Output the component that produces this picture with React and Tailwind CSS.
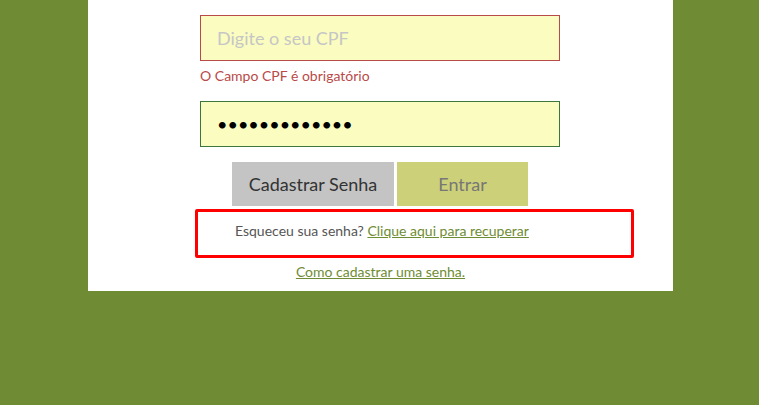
export default function App() {
  return (
    <div className="w-[759px] h-[405px] bg-[#6f8c34] font-['Lato','Liberation_Sans',sans-serif] overflow-hidden">
      <div className="ml-[88px] w-[585px] h-[291px] bg-white flex flex-col pt-[15px]">
        {/* CPF */}
        <div className="ml-[112px] w-[360px]">
          <input
            type="text"
            placeholder="Digite o seu CPF"
            className="w-full h-[46px] px-[16px] bg-[#fafdbf] border border-[#b94a48] text-[18px] text-[#555] placeholder-[#c6c6c6] outline-none"
          />
          <p className="mt-[7px] text-[14px] leading-[16px] text-[#b94a48]">
            O Campo CPF é obrigatório
          </p>
        </div>

        {/* Senha */}
        <div className="ml-[112px] w-[360px] mt-[17px]">
          <input
            type="password"
            defaultValue="1234567890123"
            className="w-full h-[46px] px-[16px] bg-[#fafdbf] border border-[#3c763d] text-[18px] text-black outline-none"
          />
        </div>

        {/* Botoes */}
        <div className="flex ml-[144px] gap-[3px] mt-[15px]">
          <button className="w-[162px] h-[44px] bg-[#c4c4c4] text-[18px] text-[#333]">
            Cadastrar Senha
          </button>
          <button className="w-[131px] h-[44px] bg-[#ccd078] text-[18px] text-[#777]">
            Entrar
          </button>
        </div>

        {/* Recuperar */}
        <div className="ml-[107px] mt-[3px] w-[439px] h-[49px] border-[3px] border-[#f00] rounded-[2px] pl-[37px] pt-[11px]">
          <p className="text-[14px] leading-[16px] text-[#555]">
            Esqueceu sua senha?{" "}
            <a href="#" className="text-[#6f8c34] underline">
              Clique aqui para recuperar
            </a>
          </p>
        </div>

        <div className="text-center mt-[1px]">
          <a href="#" className="text-[14px] leading-[16px] text-[#6f8c34] underline">
            Como cadastrar uma senha.
          </a>
        </div>
      </div>
    </div>
  );
}
